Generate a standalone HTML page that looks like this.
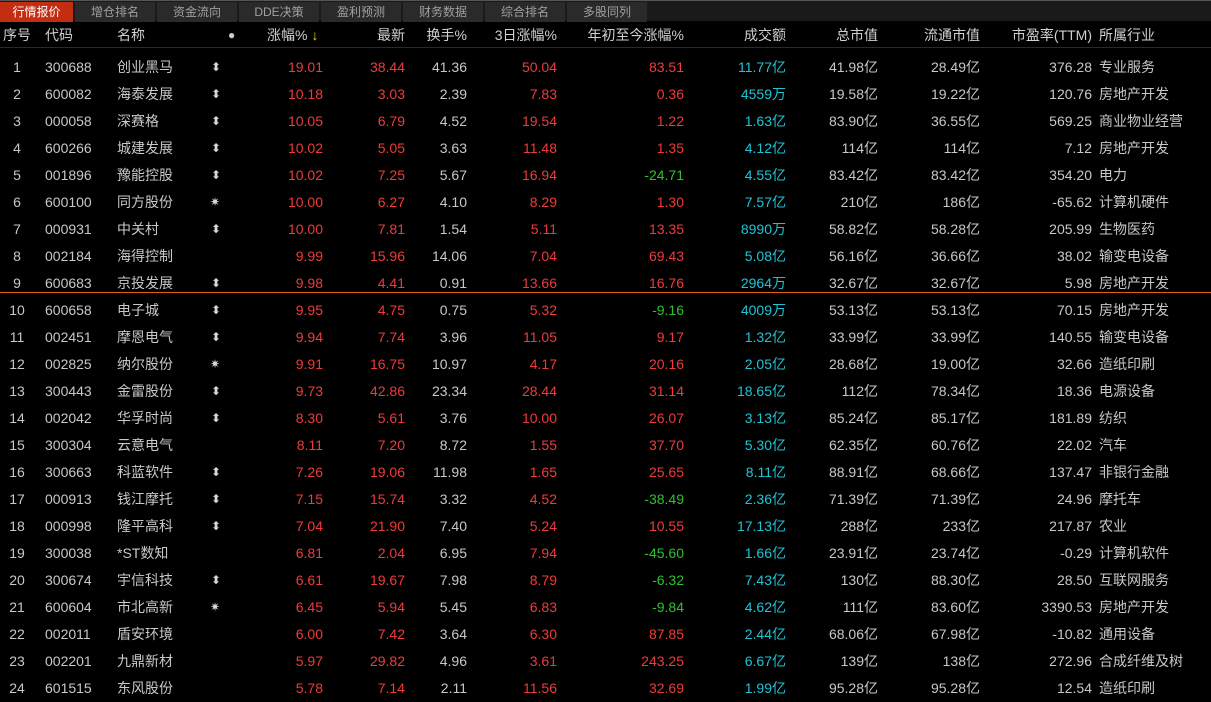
<!DOCTYPE html>
<html><head><meta charset="utf-8">
<style>
*{margin:0;padding:0;box-sizing:border-box}
html,body{width:1211px;height:697px;overflow:hidden;background:#000;font-family:"Liberation Sans","Noto Sans CJK SC",sans-serif;}
.tabs{position:absolute;left:0;top:0;width:1211px;height:21px;background:#1a1a1a;border-top:1px solid #555}
.tab{position:absolute;top:1px;height:20px;width:80px;background:#2a2a2a;color:#a0a0a0;font-size:12px;line-height:20px;text-align:center}
.tab.a{background:#c32d12;color:#fff;left:0;width:73px}
.hdr{position:absolute;left:0;top:22px;width:1211px;height:26px;font-size:14px;color:#d0d0d0;border-bottom:1px solid #2a2a2a}
.row{position:absolute;left:0;width:1211px;height:27px;font-size:14px;color:#c8c8c8}
.c{position:absolute;top:0;line-height:27px;white-space:nowrap}
.hdr .c{line-height:26px}
.r{text-align:right}
.red{color:#ee3b3b}.grn{color:#2fc02f}.cy{color:#1fc4d4}
.ic{color:#d8d8d8;font-size:12px}
</style></head><body>
<div class="tabs">
<div class="tab a">行情报价</div>
<div class="tab" style="left:75px">增仓排名</div>
<div class="tab" style="left:157px">资金流向</div>
<div class="tab" style="left:239px">DDE决策</div>
<div class="tab" style="left:321px">盈利预测</div>
<div class="tab" style="left:403px">财务数据</div>
<div class="tab" style="left:485px">综合排名</div>
<div class="tab" style="left:567px">多股同列</div>
</div>
<div class="hdr">
<span class="c" style="left:3px">序号</span>
<span class="c" style="left:45px">代码</span>
<span class="c" style="left:117px">名称</span>
<span class="c" style="left:228px;color:#ccc;font-size:12px">●</span>
<span class="c" style="left:267px">涨幅%<span style="color:#e8d800;margin-left:4px">↓</span></span>
<span class="c r" style="left:335px;width:70px">最新</span>
<span class="c r" style="left:410px;width:57px">换手%</span>
<span class="c r" style="left:470px;width:87px">3日涨幅%</span>
<span class="c r" style="left:560px;width:124px">年初至今涨幅%</span>
<span class="c r" style="left:690px;width:96px">成交额</span>
<span class="c r" style="left:790px;width:88px">总市值</span>
<span class="c r" style="left:880px;width:100px">流通市值</span>
<span class="c r" style="left:985px;width:107px">市盈率(TTM)</span>
<span class="c" style="left:1099px">所属行业</span>
</div>
<div style="position:absolute;left:0;top:292px;width:1211px;height:1px;background:#e85a10"></div>
<div class="row" style="top:54px"><span class="c" style="left:10px;width:14px;text-align:center">1</span><span class="c" style="left:45px">300688</span><span class="c" style="left:117px">创业黑马</span><span class="c ic" style="left:211px">⬍</span><span class="c r red" style="left:250px;width:73px">19.01</span><span class="c r red" style="left:335px;width:70px">38.44</span><span class="c r" style="left:410px;width:57px">41.36</span><span class="c r red" style="left:470px;width:87px">50.04</span><span class="c r red" style="left:560px;width:124px">83.51</span><span class="c r cy" style="left:690px;width:96px">11.77亿</span><span class="c r" style="left:790px;width:88px">41.98亿</span><span class="c r" style="left:880px;width:100px">28.49亿</span><span class="c r" style="left:985px;width:107px">376.28</span><span class="c" style="left:1099px">专业服务</span></div>
<div class="row" style="top:81px"><span class="c" style="left:10px;width:14px;text-align:center">2</span><span class="c" style="left:45px">600082</span><span class="c" style="left:117px">海泰发展</span><span class="c ic" style="left:211px">⬍</span><span class="c r red" style="left:250px;width:73px">10.18</span><span class="c r red" style="left:335px;width:70px">3.03</span><span class="c r" style="left:410px;width:57px">2.39</span><span class="c r red" style="left:470px;width:87px">7.83</span><span class="c r red" style="left:560px;width:124px">0.36</span><span class="c r cy" style="left:690px;width:96px">4559万</span><span class="c r" style="left:790px;width:88px">19.58亿</span><span class="c r" style="left:880px;width:100px">19.22亿</span><span class="c r" style="left:985px;width:107px">120.76</span><span class="c" style="left:1099px">房地产开发</span></div>
<div class="row" style="top:108px"><span class="c" style="left:10px;width:14px;text-align:center">3</span><span class="c" style="left:45px">000058</span><span class="c" style="left:117px">深赛格</span><span class="c ic" style="left:211px">⬍</span><span class="c r red" style="left:250px;width:73px">10.05</span><span class="c r red" style="left:335px;width:70px">6.79</span><span class="c r" style="left:410px;width:57px">4.52</span><span class="c r red" style="left:470px;width:87px">19.54</span><span class="c r red" style="left:560px;width:124px">1.22</span><span class="c r cy" style="left:690px;width:96px">1.63亿</span><span class="c r" style="left:790px;width:88px">83.90亿</span><span class="c r" style="left:880px;width:100px">36.55亿</span><span class="c r" style="left:985px;width:107px">569.25</span><span class="c" style="left:1099px">商业物业经营</span></div>
<div class="row" style="top:135px"><span class="c" style="left:10px;width:14px;text-align:center">4</span><span class="c" style="left:45px">600266</span><span class="c" style="left:117px">城建发展</span><span class="c ic" style="left:211px">⬍</span><span class="c r red" style="left:250px;width:73px">10.02</span><span class="c r red" style="left:335px;width:70px">5.05</span><span class="c r" style="left:410px;width:57px">3.63</span><span class="c r red" style="left:470px;width:87px">11.48</span><span class="c r red" style="left:560px;width:124px">1.35</span><span class="c r cy" style="left:690px;width:96px">4.12亿</span><span class="c r" style="left:790px;width:88px">114亿</span><span class="c r" style="left:880px;width:100px">114亿</span><span class="c r" style="left:985px;width:107px">7.12</span><span class="c" style="left:1099px">房地产开发</span></div>
<div class="row" style="top:162px"><span class="c" style="left:10px;width:14px;text-align:center">5</span><span class="c" style="left:45px">001896</span><span class="c" style="left:117px">豫能控股</span><span class="c ic" style="left:211px">⬍</span><span class="c r red" style="left:250px;width:73px">10.02</span><span class="c r red" style="left:335px;width:70px">7.25</span><span class="c r" style="left:410px;width:57px">5.67</span><span class="c r red" style="left:470px;width:87px">16.94</span><span class="c r grn" style="left:560px;width:124px">-24.71</span><span class="c r cy" style="left:690px;width:96px">4.55亿</span><span class="c r" style="left:790px;width:88px">83.42亿</span><span class="c r" style="left:880px;width:100px">83.42亿</span><span class="c r" style="left:985px;width:107px">354.20</span><span class="c" style="left:1099px">电力</span></div>
<div class="row" style="top:189px"><span class="c" style="left:10px;width:14px;text-align:center">6</span><span class="c" style="left:45px">600100</span><span class="c" style="left:117px">同方股份</span><span class="c ic" style="left:210px">✷</span><span class="c r red" style="left:250px;width:73px">10.00</span><span class="c r red" style="left:335px;width:70px">6.27</span><span class="c r" style="left:410px;width:57px">4.10</span><span class="c r red" style="left:470px;width:87px">8.29</span><span class="c r red" style="left:560px;width:124px">1.30</span><span class="c r cy" style="left:690px;width:96px">7.57亿</span><span class="c r" style="left:790px;width:88px">210亿</span><span class="c r" style="left:880px;width:100px">186亿</span><span class="c r" style="left:985px;width:107px">-65.62</span><span class="c" style="left:1099px">计算机硬件</span></div>
<div class="row" style="top:216px"><span class="c" style="left:10px;width:14px;text-align:center">7</span><span class="c" style="left:45px">000931</span><span class="c" style="left:117px">中关村</span><span class="c ic" style="left:211px">⬍</span><span class="c r red" style="left:250px;width:73px">10.00</span><span class="c r red" style="left:335px;width:70px">7.81</span><span class="c r" style="left:410px;width:57px">1.54</span><span class="c r red" style="left:470px;width:87px">5.11</span><span class="c r red" style="left:560px;width:124px">13.35</span><span class="c r cy" style="left:690px;width:96px">8990万</span><span class="c r" style="left:790px;width:88px">58.82亿</span><span class="c r" style="left:880px;width:100px">58.28亿</span><span class="c r" style="left:985px;width:107px">205.99</span><span class="c" style="left:1099px">生物医药</span></div>
<div class="row" style="top:243px"><span class="c" style="left:10px;width:14px;text-align:center">8</span><span class="c" style="left:45px">002184</span><span class="c" style="left:117px">海得控制</span><span class="c r red" style="left:250px;width:73px">9.99</span><span class="c r red" style="left:335px;width:70px">15.96</span><span class="c r" style="left:410px;width:57px">14.06</span><span class="c r red" style="left:470px;width:87px">7.04</span><span class="c r red" style="left:560px;width:124px">69.43</span><span class="c r cy" style="left:690px;width:96px">5.08亿</span><span class="c r" style="left:790px;width:88px">56.16亿</span><span class="c r" style="left:880px;width:100px">36.66亿</span><span class="c r" style="left:985px;width:107px">38.02</span><span class="c" style="left:1099px">输变电设备</span></div>
<div class="row" style="top:270px"><span class="c" style="left:10px;width:14px;text-align:center">9</span><span class="c" style="left:45px">600683</span><span class="c" style="left:117px">京投发展</span><span class="c ic" style="left:211px">⬍</span><span class="c r red" style="left:250px;width:73px">9.98</span><span class="c r red" style="left:335px;width:70px">4.41</span><span class="c r" style="left:410px;width:57px">0.91</span><span class="c r red" style="left:470px;width:87px">13.66</span><span class="c r red" style="left:560px;width:124px">16.76</span><span class="c r cy" style="left:690px;width:96px">2964万</span><span class="c r" style="left:790px;width:88px">32.67亿</span><span class="c r" style="left:880px;width:100px">32.67亿</span><span class="c r" style="left:985px;width:107px">5.98</span><span class="c" style="left:1099px">房地产开发</span></div>
<div class="row" style="top:297px"><span class="c" style="left:8px;width:18px;text-align:center">10</span><span class="c" style="left:45px">600658</span><span class="c" style="left:117px">电子城</span><span class="c ic" style="left:211px">⬍</span><span class="c r red" style="left:250px;width:73px">9.95</span><span class="c r red" style="left:335px;width:70px">4.75</span><span class="c r" style="left:410px;width:57px">0.75</span><span class="c r red" style="left:470px;width:87px">5.32</span><span class="c r grn" style="left:560px;width:124px">-9.16</span><span class="c r cy" style="left:690px;width:96px">4009万</span><span class="c r" style="left:790px;width:88px">53.13亿</span><span class="c r" style="left:880px;width:100px">53.13亿</span><span class="c r" style="left:985px;width:107px">70.15</span><span class="c" style="left:1099px">房地产开发</span></div>
<div class="row" style="top:324px"><span class="c" style="left:8px;width:18px;text-align:center">11</span><span class="c" style="left:45px">002451</span><span class="c" style="left:117px">摩恩电气</span><span class="c ic" style="left:211px">⬍</span><span class="c r red" style="left:250px;width:73px">9.94</span><span class="c r red" style="left:335px;width:70px">7.74</span><span class="c r" style="left:410px;width:57px">3.96</span><span class="c r red" style="left:470px;width:87px">11.05</span><span class="c r red" style="left:560px;width:124px">9.17</span><span class="c r cy" style="left:690px;width:96px">1.32亿</span><span class="c r" style="left:790px;width:88px">33.99亿</span><span class="c r" style="left:880px;width:100px">33.99亿</span><span class="c r" style="left:985px;width:107px">140.55</span><span class="c" style="left:1099px">输变电设备</span></div>
<div class="row" style="top:351px"><span class="c" style="left:8px;width:18px;text-align:center">12</span><span class="c" style="left:45px">002825</span><span class="c" style="left:117px">纳尔股份</span><span class="c ic" style="left:210px">✷</span><span class="c r red" style="left:250px;width:73px">9.91</span><span class="c r red" style="left:335px;width:70px">16.75</span><span class="c r" style="left:410px;width:57px">10.97</span><span class="c r red" style="left:470px;width:87px">4.17</span><span class="c r red" style="left:560px;width:124px">20.16</span><span class="c r cy" style="left:690px;width:96px">2.05亿</span><span class="c r" style="left:790px;width:88px">28.68亿</span><span class="c r" style="left:880px;width:100px">19.00亿</span><span class="c r" style="left:985px;width:107px">32.66</span><span class="c" style="left:1099px">造纸印刷</span></div>
<div class="row" style="top:378px"><span class="c" style="left:8px;width:18px;text-align:center">13</span><span class="c" style="left:45px">300443</span><span class="c" style="left:117px">金雷股份</span><span class="c ic" style="left:211px">⬍</span><span class="c r red" style="left:250px;width:73px">9.73</span><span class="c r red" style="left:335px;width:70px">42.86</span><span class="c r" style="left:410px;width:57px">23.34</span><span class="c r red" style="left:470px;width:87px">28.44</span><span class="c r red" style="left:560px;width:124px">31.14</span><span class="c r cy" style="left:690px;width:96px">18.65亿</span><span class="c r" style="left:790px;width:88px">112亿</span><span class="c r" style="left:880px;width:100px">78.34亿</span><span class="c r" style="left:985px;width:107px">18.36</span><span class="c" style="left:1099px">电源设备</span></div>
<div class="row" style="top:405px"><span class="c" style="left:8px;width:18px;text-align:center">14</span><span class="c" style="left:45px">002042</span><span class="c" style="left:117px">华孚时尚</span><span class="c ic" style="left:211px">⬍</span><span class="c r red" style="left:250px;width:73px">8.30</span><span class="c r red" style="left:335px;width:70px">5.61</span><span class="c r" style="left:410px;width:57px">3.76</span><span class="c r red" style="left:470px;width:87px">10.00</span><span class="c r red" style="left:560px;width:124px">26.07</span><span class="c r cy" style="left:690px;width:96px">3.13亿</span><span class="c r" style="left:790px;width:88px">85.24亿</span><span class="c r" style="left:880px;width:100px">85.17亿</span><span class="c r" style="left:985px;width:107px">181.89</span><span class="c" style="left:1099px">纺织</span></div>
<div class="row" style="top:432px"><span class="c" style="left:8px;width:18px;text-align:center">15</span><span class="c" style="left:45px">300304</span><span class="c" style="left:117px">云意电气</span><span class="c r red" style="left:250px;width:73px">8.11</span><span class="c r red" style="left:335px;width:70px">7.20</span><span class="c r" style="left:410px;width:57px">8.72</span><span class="c r red" style="left:470px;width:87px">1.55</span><span class="c r red" style="left:560px;width:124px">37.70</span><span class="c r cy" style="left:690px;width:96px">5.30亿</span><span class="c r" style="left:790px;width:88px">62.35亿</span><span class="c r" style="left:880px;width:100px">60.76亿</span><span class="c r" style="left:985px;width:107px">22.02</span><span class="c" style="left:1099px">汽车</span></div>
<div class="row" style="top:459px"><span class="c" style="left:8px;width:18px;text-align:center">16</span><span class="c" style="left:45px">300663</span><span class="c" style="left:117px">科蓝软件</span><span class="c ic" style="left:211px">⬍</span><span class="c r red" style="left:250px;width:73px">7.26</span><span class="c r red" style="left:335px;width:70px">19.06</span><span class="c r" style="left:410px;width:57px">11.98</span><span class="c r red" style="left:470px;width:87px">1.65</span><span class="c r red" style="left:560px;width:124px">25.65</span><span class="c r cy" style="left:690px;width:96px">8.11亿</span><span class="c r" style="left:790px;width:88px">88.91亿</span><span class="c r" style="left:880px;width:100px">68.66亿</span><span class="c r" style="left:985px;width:107px">137.47</span><span class="c" style="left:1099px">非银行金融</span></div>
<div class="row" style="top:486px"><span class="c" style="left:8px;width:18px;text-align:center">17</span><span class="c" style="left:45px">000913</span><span class="c" style="left:117px">钱江摩托</span><span class="c ic" style="left:211px">⬍</span><span class="c r red" style="left:250px;width:73px">7.15</span><span class="c r red" style="left:335px;width:70px">15.74</span><span class="c r" style="left:410px;width:57px">3.32</span><span class="c r red" style="left:470px;width:87px">4.52</span><span class="c r grn" style="left:560px;width:124px">-38.49</span><span class="c r cy" style="left:690px;width:96px">2.36亿</span><span class="c r" style="left:790px;width:88px">71.39亿</span><span class="c r" style="left:880px;width:100px">71.39亿</span><span class="c r" style="left:985px;width:107px">24.96</span><span class="c" style="left:1099px">摩托车</span></div>
<div class="row" style="top:513px"><span class="c" style="left:8px;width:18px;text-align:center">18</span><span class="c" style="left:45px">000998</span><span class="c" style="left:117px">隆平高科</span><span class="c ic" style="left:211px">⬍</span><span class="c r red" style="left:250px;width:73px">7.04</span><span class="c r red" style="left:335px;width:70px">21.90</span><span class="c r" style="left:410px;width:57px">7.40</span><span class="c r red" style="left:470px;width:87px">5.24</span><span class="c r red" style="left:560px;width:124px">10.55</span><span class="c r cy" style="left:690px;width:96px">17.13亿</span><span class="c r" style="left:790px;width:88px">288亿</span><span class="c r" style="left:880px;width:100px">233亿</span><span class="c r" style="left:985px;width:107px">217.87</span><span class="c" style="left:1099px">农业</span></div>
<div class="row" style="top:540px"><span class="c" style="left:8px;width:18px;text-align:center">19</span><span class="c" style="left:45px">300038</span><span class="c" style="left:117px">*ST数知</span><span class="c r red" style="left:250px;width:73px">6.81</span><span class="c r red" style="left:335px;width:70px">2.04</span><span class="c r" style="left:410px;width:57px">6.95</span><span class="c r red" style="left:470px;width:87px">7.94</span><span class="c r grn" style="left:560px;width:124px">-45.60</span><span class="c r cy" style="left:690px;width:96px">1.66亿</span><span class="c r" style="left:790px;width:88px">23.91亿</span><span class="c r" style="left:880px;width:100px">23.74亿</span><span class="c r" style="left:985px;width:107px">-0.29</span><span class="c" style="left:1099px">计算机软件</span></div>
<div class="row" style="top:567px"><span class="c" style="left:8px;width:18px;text-align:center">20</span><span class="c" style="left:45px">300674</span><span class="c" style="left:117px">宇信科技</span><span class="c ic" style="left:211px">⬍</span><span class="c r red" style="left:250px;width:73px">6.61</span><span class="c r red" style="left:335px;width:70px">19.67</span><span class="c r" style="left:410px;width:57px">7.98</span><span class="c r red" style="left:470px;width:87px">8.79</span><span class="c r grn" style="left:560px;width:124px">-6.32</span><span class="c r cy" style="left:690px;width:96px">7.43亿</span><span class="c r" style="left:790px;width:88px">130亿</span><span class="c r" style="left:880px;width:100px">88.30亿</span><span class="c r" style="left:985px;width:107px">28.50</span><span class="c" style="left:1099px">互联网服务</span></div>
<div class="row" style="top:594px"><span class="c" style="left:8px;width:18px;text-align:center">21</span><span class="c" style="left:45px">600604</span><span class="c" style="left:117px">市北高新</span><span class="c ic" style="left:210px">✷</span><span class="c r red" style="left:250px;width:73px">6.45</span><span class="c r red" style="left:335px;width:70px">5.94</span><span class="c r" style="left:410px;width:57px">5.45</span><span class="c r red" style="left:470px;width:87px">6.83</span><span class="c r grn" style="left:560px;width:124px">-9.84</span><span class="c r cy" style="left:690px;width:96px">4.62亿</span><span class="c r" style="left:790px;width:88px">111亿</span><span class="c r" style="left:880px;width:100px">83.60亿</span><span class="c r" style="left:985px;width:107px">3390.53</span><span class="c" style="left:1099px">房地产开发</span></div>
<div class="row" style="top:621px"><span class="c" style="left:8px;width:18px;text-align:center">22</span><span class="c" style="left:45px">002011</span><span class="c" style="left:117px">盾安环境</span><span class="c r red" style="left:250px;width:73px">6.00</span><span class="c r red" style="left:335px;width:70px">7.42</span><span class="c r" style="left:410px;width:57px">3.64</span><span class="c r red" style="left:470px;width:87px">6.30</span><span class="c r red" style="left:560px;width:124px">87.85</span><span class="c r cy" style="left:690px;width:96px">2.44亿</span><span class="c r" style="left:790px;width:88px">68.06亿</span><span class="c r" style="left:880px;width:100px">67.98亿</span><span class="c r" style="left:985px;width:107px">-10.82</span><span class="c" style="left:1099px">通用设备</span></div>
<div class="row" style="top:648px"><span class="c" style="left:8px;width:18px;text-align:center">23</span><span class="c" style="left:45px">002201</span><span class="c" style="left:117px">九鼎新材</span><span class="c r red" style="left:250px;width:73px">5.97</span><span class="c r red" style="left:335px;width:70px">29.82</span><span class="c r" style="left:410px;width:57px">4.96</span><span class="c r red" style="left:470px;width:87px">3.61</span><span class="c r red" style="left:560px;width:124px">243.25</span><span class="c r cy" style="left:690px;width:96px">6.67亿</span><span class="c r" style="left:790px;width:88px">139亿</span><span class="c r" style="left:880px;width:100px">138亿</span><span class="c r" style="left:985px;width:107px">272.96</span><span class="c" style="left:1099px">合成纤维及树</span></div>
<div class="row" style="top:675px"><span class="c" style="left:8px;width:18px;text-align:center">24</span><span class="c" style="left:45px">601515</span><span class="c" style="left:117px">东风股份</span><span class="c r red" style="left:250px;width:73px">5.78</span><span class="c r red" style="left:335px;width:70px">7.14</span><span class="c r" style="left:410px;width:57px">2.11</span><span class="c r red" style="left:470px;width:87px">11.56</span><span class="c r red" style="left:560px;width:124px">32.69</span><span class="c r cy" style="left:690px;width:96px">1.99亿</span><span class="c r" style="left:790px;width:88px">95.28亿</span><span class="c r" style="left:880px;width:100px">95.28亿</span><span class="c r" style="left:985px;width:107px">12.54</span><span class="c" style="left:1099px">造纸印刷</span></div>
</body></html>
